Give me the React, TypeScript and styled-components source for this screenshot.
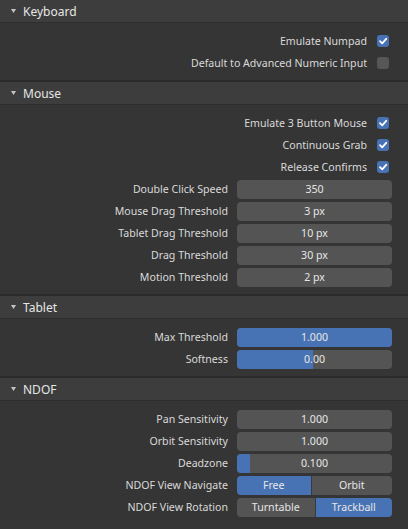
import React from 'react'
import styled, { createGlobalStyle } from 'styled-components'

const GlobalStyle = createGlobalStyle`
  html, body {
    margin: 0;
    padding: 0;
    background: #2b2b2b;
  }
  body {
    font-family: 'Noto Sans', 'Open Sans', sans-serif;
    -webkit-font-smoothing: antialiased;
  }
`

const Page = styled.div`
  width: 408px;
  min-height: 529px;
  display: flex;
  flex-direction: column;
  gap: 2px;
  background: #2b2b2b;
`

const Panel = styled.section<{ $grow?: boolean }>`
  display: flex;
  flex-direction: column;
  flex: ${(p) => (p.$grow ? 1 : 'none')};
  background: #353535;
`

const PanelHeader = styled.div`
  height: 22px;
  display: flex;
  align-items: center;
  padding-left: 10px;
  gap: 6px;
  background: #3d3d3d;
  border-bottom: 1px solid #2e2e2e;
  color: #e6e6e6;
  font-size: 12px;
`

const PanelBody = styled.div`
  padding: 7px 16px 6px 0;
  display: flex;
  flex-direction: column;
`

const Row = styled.div`
  height: 22px;
  display: grid;
  grid-template-columns: 1fr 155px;
  column-gap: 9px;
  align-items: center;
`

const Label = styled.span`
  text-align: right;
  color: #dadada;
  font-size: 10.6px;
  white-space: nowrap;
`

const CheckRow = styled.label`
  height: 22px;
  display: flex;
  align-items: center;
  justify-content: flex-end;
  gap: 10px;
  color: #dadada;
  font-size: 10.6px;
`

const Box = styled.span<{ $on: boolean }>`
  width: 12px;
  height: 12px;
  margin-right: 3px;
  border-radius: 3px;
  background: ${(p) => (p.$on ? '#4772b3' : '#575757')};
  display: flex;
  align-items: center;
  justify-content: center;
`

const Field = styled.div`
  position: relative;
  height: 19px;
  border-radius: 4px;
  background: #545454;
  overflow: hidden;
  display: flex;
  align-items: center;
  justify-content: center;
  color: #e6e6e6;
  font-size: 10.6px;
`

const Fill = styled.div`
  position: absolute;
  left: 0;
  top: 0;
  bottom: 0;
  background: #4772b3;
`

const FieldText = styled.span`
  position: relative;
`

const Enum = styled.div`
  height: 19px;
  display: flex;
  border-radius: 4px;
  overflow: hidden;
  gap: 1px;
  background: #3a3a3a;
`

const EnumItem = styled.div<{ $on: boolean }>`
  display: flex;
  align-items: center;
  justify-content: center;
  background: ${(p) => (p.$on ? '#4772b3' : '#545454')};
  color: #e6e6e6;
  font-size: 10.6px;
`

const Arrow = () => (
  <svg width="7" height="6" viewBox="0 0 7 6">
    <polygon points="1,1 6,1 3.5,5" fill="#c4c4c4" />
  </svg>
)

const Check = () => (
  <svg width="10" height="10" viewBox="0 0 10 10">
    <polyline
      points="2,5.2 4.2,7.4 8.2,2.8"
      fill="none"
      stroke="#ffffff"
      strokeWidth="1.8"
      strokeLinecap="round"
      strokeLinejoin="round"
    />
  </svg>
)

const Checkbox = ({ label, on }: { label: string; on: boolean }) => (
  <CheckRow>
    {label}
    <Box $on={on}>{on && <Check />}</Box>
  </CheckRow>
)

const NumberRow = ({
  label,
  value,
  fill,
}: {
  label: string
  value: string
  fill?: number
}) => (
  <Row>
    <Label>{label}</Label>
    <Field>
      {fill !== undefined && <Fill style={{ width: fill }} />}
      <FieldText>{value}</FieldText>
    </Field>
  </Row>
)

const EnumRow = ({
  label,
  items,
}: {
  label: string
  items: { text: string; width: number; on: boolean }[]
}) => (
  <Row>
    <Label>{label}</Label>
    <Enum>
      {items.map((it) => (
        <EnumItem key={it.text} $on={it.on} style={{ flex: it.width }}>
          {it.text}
        </EnumItem>
      ))}
    </Enum>
  </Row>
)

const Section = ({
  title,
  grow,
  children,
}: {
  title: string
  grow?: boolean
  children: React.ReactNode
}) => (
  <Panel $grow={grow}>
    <PanelHeader>
      <Arrow />
      {title}
    </PanelHeader>
    <PanelBody>{children}</PanelBody>
  </Panel>
)

export default function App() {
  return (
    <>
      <GlobalStyle />
      <Page>
        <Section title="Keyboard">
          <Checkbox label="Emulate Numpad" on />
          <Checkbox label="Default to Advanced Numeric Input" on={false} />
        </Section>
        <Section title="Mouse">
          <Checkbox label="Emulate 3 Button Mouse" on />
          <Checkbox label="Continuous Grab" on />
          <Checkbox label="Release Confirms" on />
          <NumberRow label="Double Click Speed" value="350" />
          <NumberRow label="Mouse Drag Threshold" value="3 px" />
          <NumberRow label="Tablet Drag Threshold" value="10 px" />
          <NumberRow label="Drag Threshold" value="30 px" />
          <NumberRow label="Motion Threshold" value="2 px" />
        </Section>
        <Section title="Tablet">
          <NumberRow label="Max Threshold" value="1.000" fill={155} />
          <NumberRow label="Softness" value="0.00" fill={76} />
        </Section>
        <Section title="NDOF" grow>
          <NumberRow label="Pan Sensitivity" value="1.000" />
          <NumberRow label="Orbit Sensitivity" value="1.000" />
          <NumberRow label="Deadzone" value="0.100" fill={13} />
          <EnumRow
            label="NDOF View Navigate"
            items={[
              { text: 'Free', width: 74, on: true },
              { text: 'Orbit', width: 81, on: false },
            ]}
          />
          <EnumRow
            label="NDOF View Rotation"
            items={[
              { text: 'Turntable', width: 78, on: false },
              { text: 'Trackball', width: 77, on: true },
            ]}
          />
        </Section>
      </Page>
    </>
  )
}
